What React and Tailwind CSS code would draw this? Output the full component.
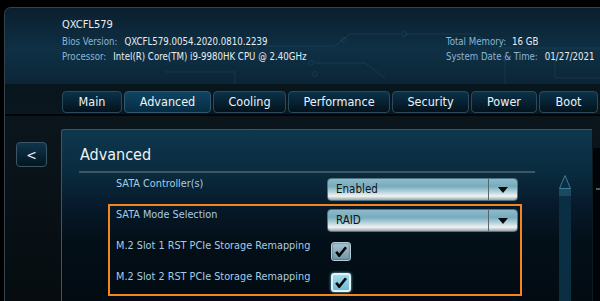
import React from 'react';

const tabs = [
  { name: 'Main', w: 'w-[60px]' },
  { name: 'Advanced', w: 'w-[87px]', active: true },
  { name: 'Cooling', w: 'w-[73px]' },
  { name: 'Performance', w: 'w-[102px]' },
  { name: 'Security', w: 'w-[77px]' },
  { name: 'Power', w: 'w-[66px]' },
  { name: 'Boot', w: 'w-[59px]' },
];

const Dropdown = ({ value }) => (
  <div className="flex w-[191px] h-[23px] rounded-[4px] border border-[#4f7482] overflow-hidden bg-[linear-gradient(to_bottom,#8dbccb_0%,#76abbd_35%,#b9d4dc_62%,#f0f3f4_82%,#9ba6aa_100%)]">
    <div className="flex-1 flex items-center pl-[8px] text-[11.5px] text-[#101010]">{value}</div>
    <div className="w-[1px] bg-[#56666c]" />
    <div className="w-[28px] flex items-center justify-center">
      <svg width="10" height="6" viewBox="0 0 10 6">
        <path d="M0 0 H10 L5 6 Z" fill="#0a0a0a" />
      </svg>
    </div>
  </div>
);

const Checkbox = ({ focused }) => (
  <div
    className={
      focused
        ? 'ml-[4px] w-[20px] h-[19px] rounded-[3px] border-2 border-[#e4f3f8] bg-[linear-gradient(to_bottom,#a6dcee,#6fb9d4)] shadow-[0_0_3px_#7fd0ee] flex items-center justify-center'
        : 'ml-[4px] w-[20px] h-[19px] rounded-[3px] border border-[#b6ccd4] bg-[linear-gradient(to_bottom,#a9c6d1,#6d94a5)] shadow-[inset_0_0_2px_#2d4c59] flex items-center justify-center'
    }
  >
    <svg width="12" height="11" viewBox="0 0 12 11">
      <path d="M1.2 5.8 L4.2 9.6 L11 1.2" fill="none" stroke="#050505" strokeWidth="2.6" />
    </svg>
  </div>
);

const Row = ({ label, children, labelClass = '' }) => (
  <div className="flex items-start">
    <div className={`w-[217px] pl-[6px] text-[10.8px] leading-[12px] text-[#a6cce4] ${labelClass}`}>{label}</div>
    {children}
  </div>
);

export default function App() {
  return (
    <div className="w-[600px] h-[301px] bg-black overflow-hidden flex flex-col pt-[7px] pl-[4px] font-['DejaVu_Sans_Condensed','DejaVu_Sans',sans-serif]">
      <div className="flex-1 flex flex-col border-l border-t border-[#33444e] rounded-tl-[7px] overflow-hidden bg-[#081218]">
        {/* Header */}
        <div className="relative h-[76px] flex bg-[linear-gradient(to_bottom,#0a1f2e_0%,#0f3045_55%,#0c2536_100%)]">
          <svg className="absolute inset-0" width="596" height="76" viewBox="0 0 596 76">
            <g fill="none" stroke="#4d7d96" strokeOpacity="0.18" strokeWidth="1">
              <path d="M260 38 H330 L345 26 H395" />
              <circle cx="339" cy="32" r="2.5" />
              <path d="M400 26 H470 L490 40 H596" />
              <circle cx="399" cy="26" r="2.5" />
              <path d="M310 55 H360 L380 70" />
              <circle cx="306" cy="55" r="2.5" />
              <path d="M500 52 V76" />
              <circle cx="500" cy="50" r="2.5" />
              <path d="M550 40 V70 H596" />
              <circle cx="250" cy="38" r="2.5" />
              <path d="M160 64 H230 V76" />
              <circle cx="310" cy="66" r="2.5" />
            </g>
          </svg>
          <div className="relative flex-1 pl-[57px] pt-[9px] text-[9.6px] leading-[15px] whitespace-nowrap">
            <div className="text-[11px] leading-[16px] text-[#e9eef1]">QXCFL579</div>
            <div className="mt-[1px]">
              <span className="text-[#88b6d6]">Bios Version:</span>
              <span className="ml-[7px] text-[#e9eef1]">QXCFL579.0054.2020.0810.2239</span>
            </div>
            <div>
              <span className="text-[#88b6d6]">Processor:</span>
              <span className="ml-[7px] text-[#e9eef1]">Intel(R) Core(TM) i9-9980HK CPU @ 2.40GHz</span>
            </div>
          </div>
          <div className="relative w-[154px] pt-[26px] text-[9.6px] leading-[15px] whitespace-nowrap">
            <div>
              <span className="text-[#88b6d6]">Total Memory:</span>
              <span className="ml-[6px] text-[#e9eef1]">16 GB</span>
            </div>
            <div>
              <span className="text-[#88b6d6]">System Date &amp; Time:</span>
              <span className="ml-[7px] text-[#e9eef1]">01/27/2021</span>
            </div>
          </div>
        </div>

        {/* Tabs */}
        <div className="h-[30px] flex gap-[2px] pt-[7px] pl-[57px] bg-[linear-gradient(to_bottom,#07151d,#0b171e)]">
          {tabs.map((t) => (
            <div
              key={t.name}
              className={`${t.w} h-[22px] shrink-0 flex items-center justify-center rounded-[4px] border text-[12.5px] text-[#eef3f6] ${
                t.active
                  ? 'border-[#2d5973] bg-[linear-gradient(to_bottom,#0f4461,#072c42)]'
                  : 'border-[#2a4a5d] bg-[linear-gradient(to_bottom,#0b3249,#03121c)]'
              }`}
            >
              {t.name}
            </div>
          ))}
        </div>
        <div className="h-[2px] bg-[#020508]" />

        {/* Body */}
        <div className="flex-1 flex bg-[linear-gradient(to_bottom,#0b161c,#060c10)]">
          <div className="w-[56px] shrink-0 pt-[26px] pl-[11px]">
            <div className="w-[31px] h-[25px] rounded-[4px] border border-[#3b5666] bg-[linear-gradient(to_bottom,#0f354b,#031520)] flex items-center justify-center text-[14px] text-[#e9eef1] leading-none">
              &lt;
            </div>
          </div>

          <div className="w-[531px] shrink-0 mt-[13px] flex border-l border-t border-[#3a5667] rounded-tl-[3px] bg-[linear-gradient(to_bottom,#0e374e_0%,#0a2b3e_25%,#06192a_45%,#030f18_65%,#020b12_100%)]">
            <div className="w-[497px] shrink-0 pt-[14px]">
              <div className="pl-[18px] text-[16px] leading-[22px] text-[#eef3f6]">Advanced</div>
              <div className="ml-[17px] mt-[5px] w-[456px] h-[2px] bg-[#3b5868]" />
              <div className="ml-[48px] mt-[5px]">
                <Row label="SATA Controller(s)">
                  <Dropdown value="Enabled" />
                </Row>
                <div className="ml-[-2px] mt-[3px] w-[414px] border-2 border-[#f5861f] pt-[3px] pb-[2px]">
                  <Row label="SATA Mode Selection">
                    <Dropdown value="RAID" />
                  </Row>
                  <div className="mt-[10px]">
                    <Row label="M.2 Slot 1 RST PCIe Storage Remapping" labelClass="mt-[-2px]">
                      <Checkbox />
                    </Row>
                  </div>
                  <div className="mt-[12px]">
                    <Row label="M.2 Slot 2 RST PCIe Storage Remapping" labelClass="mt-[-2px]">
                      <Checkbox focused />
                    </Row>
                  </div>
                </div>
              </div>
            </div>
            <div className="w-[12px] shrink-0 mt-[45px] flex flex-col">
              <svg width="12" height="14" viewBox="0 0 12 14">
                <path d="M6 0.5 L11.5 13.5 H0.5 Z" fill="#0a2d40" stroke="#3e7d99" strokeWidth="1" />
              </svg>
              <div className="h-[7px] bg-[#1a4a60]" />
              <div className="flex-1 bg-[#0b2f42]" />
            </div>
          </div>

          <div className="flex-1 mt-[32px] bg-[#010507] border-l border-[#0c1a22] pt-[40px]">
            <div className="ml-[3px] h-[2px] bg-[#4a5a62]" />
          </div>
        </div>
      </div>
    </div>
  );
}
